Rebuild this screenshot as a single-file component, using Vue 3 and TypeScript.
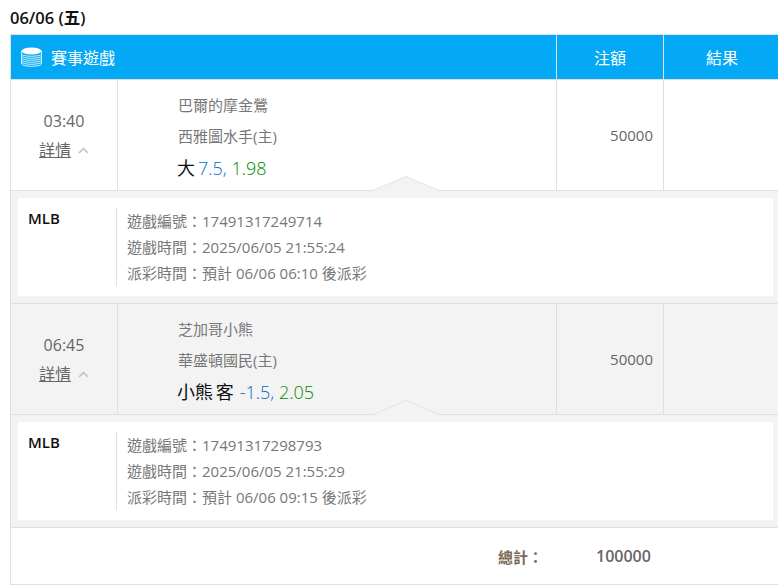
<script setup lang="ts">
interface Game {
  time: string
  home: string
  away: string
  pickLabel: string
  line: string
  odds: string
  amount: string
  id: string
  placed: string
  payout: string
  shaded: boolean
}
const games: Game[] = [
  { time: '03:40', home: '巴爾的摩金鶯', away: '西雅圖水手(主)', pickLabel: '大', line: '7.5, ', odds: '1.98', amount: '50000', id: '17491317249714', placed: '2025/06/05 21:55:24', payout: '預計 06/06 06:10 後派彩', shaded: false },
  { time: '06:45', home: '芝加哥小熊', away: '華盛頓國民(主)', pickLabel: '小熊 客', line: '-1.5, ', odds: '2.05', amount: '50000', id: '17491317298793', placed: '2025/06/05 21:55:29', payout: '預計 06/06 09:15 後派彩', shaded: true },
]
</script>

<template>
  <div class="page">
    <div class="date">06/06 (五)</div>
    <div class="table">
      <div class="head">
        <div class="head-main">
          <svg class="db" width="21" height="21" viewBox="0 0 21 21">
            <ellipse cx="10.5" cy="4" rx="10" ry="3.500" fill="#fff" />
            <path d="M.5 7c1 3 19 3 20 0M.5 9c1 3 19 3 20 0M.5 11c1 3 19 3 20 0M.5 13c1 3 19 3 20 0M.5 15c1 3 19 3 20 0M.5 17c1 3 19 3 20 0" fill="none" stroke="#fff" stroke-width="1" opacity=".8" />
            <path d="M.5 4v13M20.500 4v13" stroke="#fff" stroke-width="1" opacity=".8" />
          </svg>
          <span>賽事遊戲</span>
        </div>
        <div class="head-cell">注額</div>
        <div class="head-cell">結果</div>
      </div>

      <template v-for="g in games" :key="g.id">
        <div class="row" :class="{ shaded: g.shaded }">
          <div class="time-cell">
            <div class="time">{{ g.time }}</div>
            <div class="more">
              <span class="more-link">詳情</span>
              <svg class="chev" width="11" height="7" viewBox="0 0 11 7"><path d="M1 6l4.500-4.500L10 6" fill="none" stroke="#c4c4c4" stroke-width="1.600" /></svg>
            </div>
          </div>
          <div class="match-cell">
            <div class="team">{{ g.home }}</div>
            <div class="team">{{ g.away }}</div>
            <div class="pick"><span class="label">{{ g.pickLabel }}</span><span class="line">{{ g.line }}</span><span class="odds">{{ g.odds }}</span></div>
            <svg class="notch" width="66" height="15" viewBox="0 0 66 15">
              <path d="M0 15L33 .5 66 15z" fill="#f3f3f3" />
              <path d="M0 14.500L33 .5 66 14.500" fill="none" stroke="#e2e2e2" />
            </svg>
          </div>
          <div class="amount-cell">{{ g.amount }}</div>
          <div class="result-cell"></div>
        </div>
        <div class="detail">
          <div class="detail-box">
            <div class="league">MLB</div>
            <div class="info">
              <div>遊戲編號：{{ g.id }}</div>
              <div>遊戲時間：{{ g.placed }}</div>
              <div>派彩時間：{{ g.payout }}</div>
            </div>
          </div>
        </div>
      </template>

      <div class="total">
        <span class="total-label">總計：</span>
        <span class="total-value">100000</span>
      </div>
    </div>
  </div>
</template>

<style>
html, body { margin: 0; background: #fff; overflow: hidden; }
</style>

<style scoped>
.page {
  width: 778px;
  height: 587px;
  overflow: hidden;
  font-family: "Open Sans", "Noto Sans CJK TC", sans-serif;
  color: #666;
  font-size: 14px;
}
.date {
  height: 34px;
  padding: 8px 0 0 10px;
  box-sizing: border-box;
  font-size: 16.500px;
  line-height: 19px;
  font-weight: 600;
  color: #111;
}
.table {
  width: 770px;
  margin-left: 10px;
  border: 1px solid #e0e0e0;
  border-right: 0;
  box-sizing: border-box;
}
.row {
  display: grid;
  grid-template-columns: 107px 438px 108px 1fr;
  height: 111px;
  border-bottom: 1px solid #e0e0e0;
  box-sizing: border-box;
  background: #fff;
}
.head {
  display: grid;
  grid-template-columns: 545px 107px 1fr;
  height: 45px;
  background: #03a9f4;
  color: #fff;
  border-bottom: 1px solid #e0e0e0;
  box-sizing: border-box;
  font-size: 16px;
}
.head-main {
  display: flex;
  align-items: center;
  gap: 9px;
  padding-left: 10px;
}
.head-cell {
  display: flex;
  align-items: center;
  justify-content: center;
  border-left: 1px solid #e0e0e0;
}
.row.shaded { background: #f3f3f3; }
.time-cell {
  border-right: 1px solid #e0e0e0;
  text-align: center;
  padding-top: 30px;
  box-sizing: border-box;
}
.time { font-size: 16px; line-height: 22px; color: #666; }
.more { margin-top: 8px; line-height: 20px; font-size: 16px; }
.more-link { text-decoration: underline; color: #666; padding-right: 2px; }
.chev { margin-left: 5px; vertical-align: 2px; }
.match-cell {
  position: relative;
  padding: 10px 0 0 60px;
  box-sizing: border-box;
}
.team { line-height: 31px; height: 31px; font-size: 15px; color: #777; }
.pick { margin: 2px 0 0 -1px; font-size: 18px; line-height: 28px; color: #111; }
.label { word-spacing: -2px; }
.line { color: #0070c8; font-weight: 300; margin-left: 3px; white-space: pre; }
.shaded .line { margin-left: 6px; }
.odds { color: #008a00; font-weight: 300; }
.notch { position: absolute; left: 255px; bottom: -1px; }
.amount-cell {
  border-left: 1px solid #e0e0e0;
  border-right: 1px solid #e0e0e0;
  text-align: right;
  padding-right: 10px;
  line-height: 110px;
  font-size: 15px;
}
.detail {
  height: 113px;
  padding: 7px;
  box-sizing: border-box;
  background: #f3f3f3;
  border-bottom: 1px solid #e0e0e0;
}
.detail-box {
  height: 98px;
  background: #fff;
  display: flex;
  padding: 10px 0;
  box-sizing: border-box;
}
.league {
  width: 99px;
  box-sizing: border-box;
  padding-left: 10px;
  font-size: 15px;
  line-height: 20px;
  font-weight: 600;
  color: #111;
  border-right: 1px solid #e0e0e0;
}
.info {
  padding-left: 10px;
  font-size: 15px;
  line-height: 26px;
  color: #777;
}
.total {
  height: 56px;
  display: flex;
  align-items: center;
  font-size: 15px;
  font-weight: 600;
}
.total-label { margin-left: 487px; width: 98px; color: #7a6a55; }
.total-value { color: #666; font-size: 16px; font-weight: 600; }
</style>
